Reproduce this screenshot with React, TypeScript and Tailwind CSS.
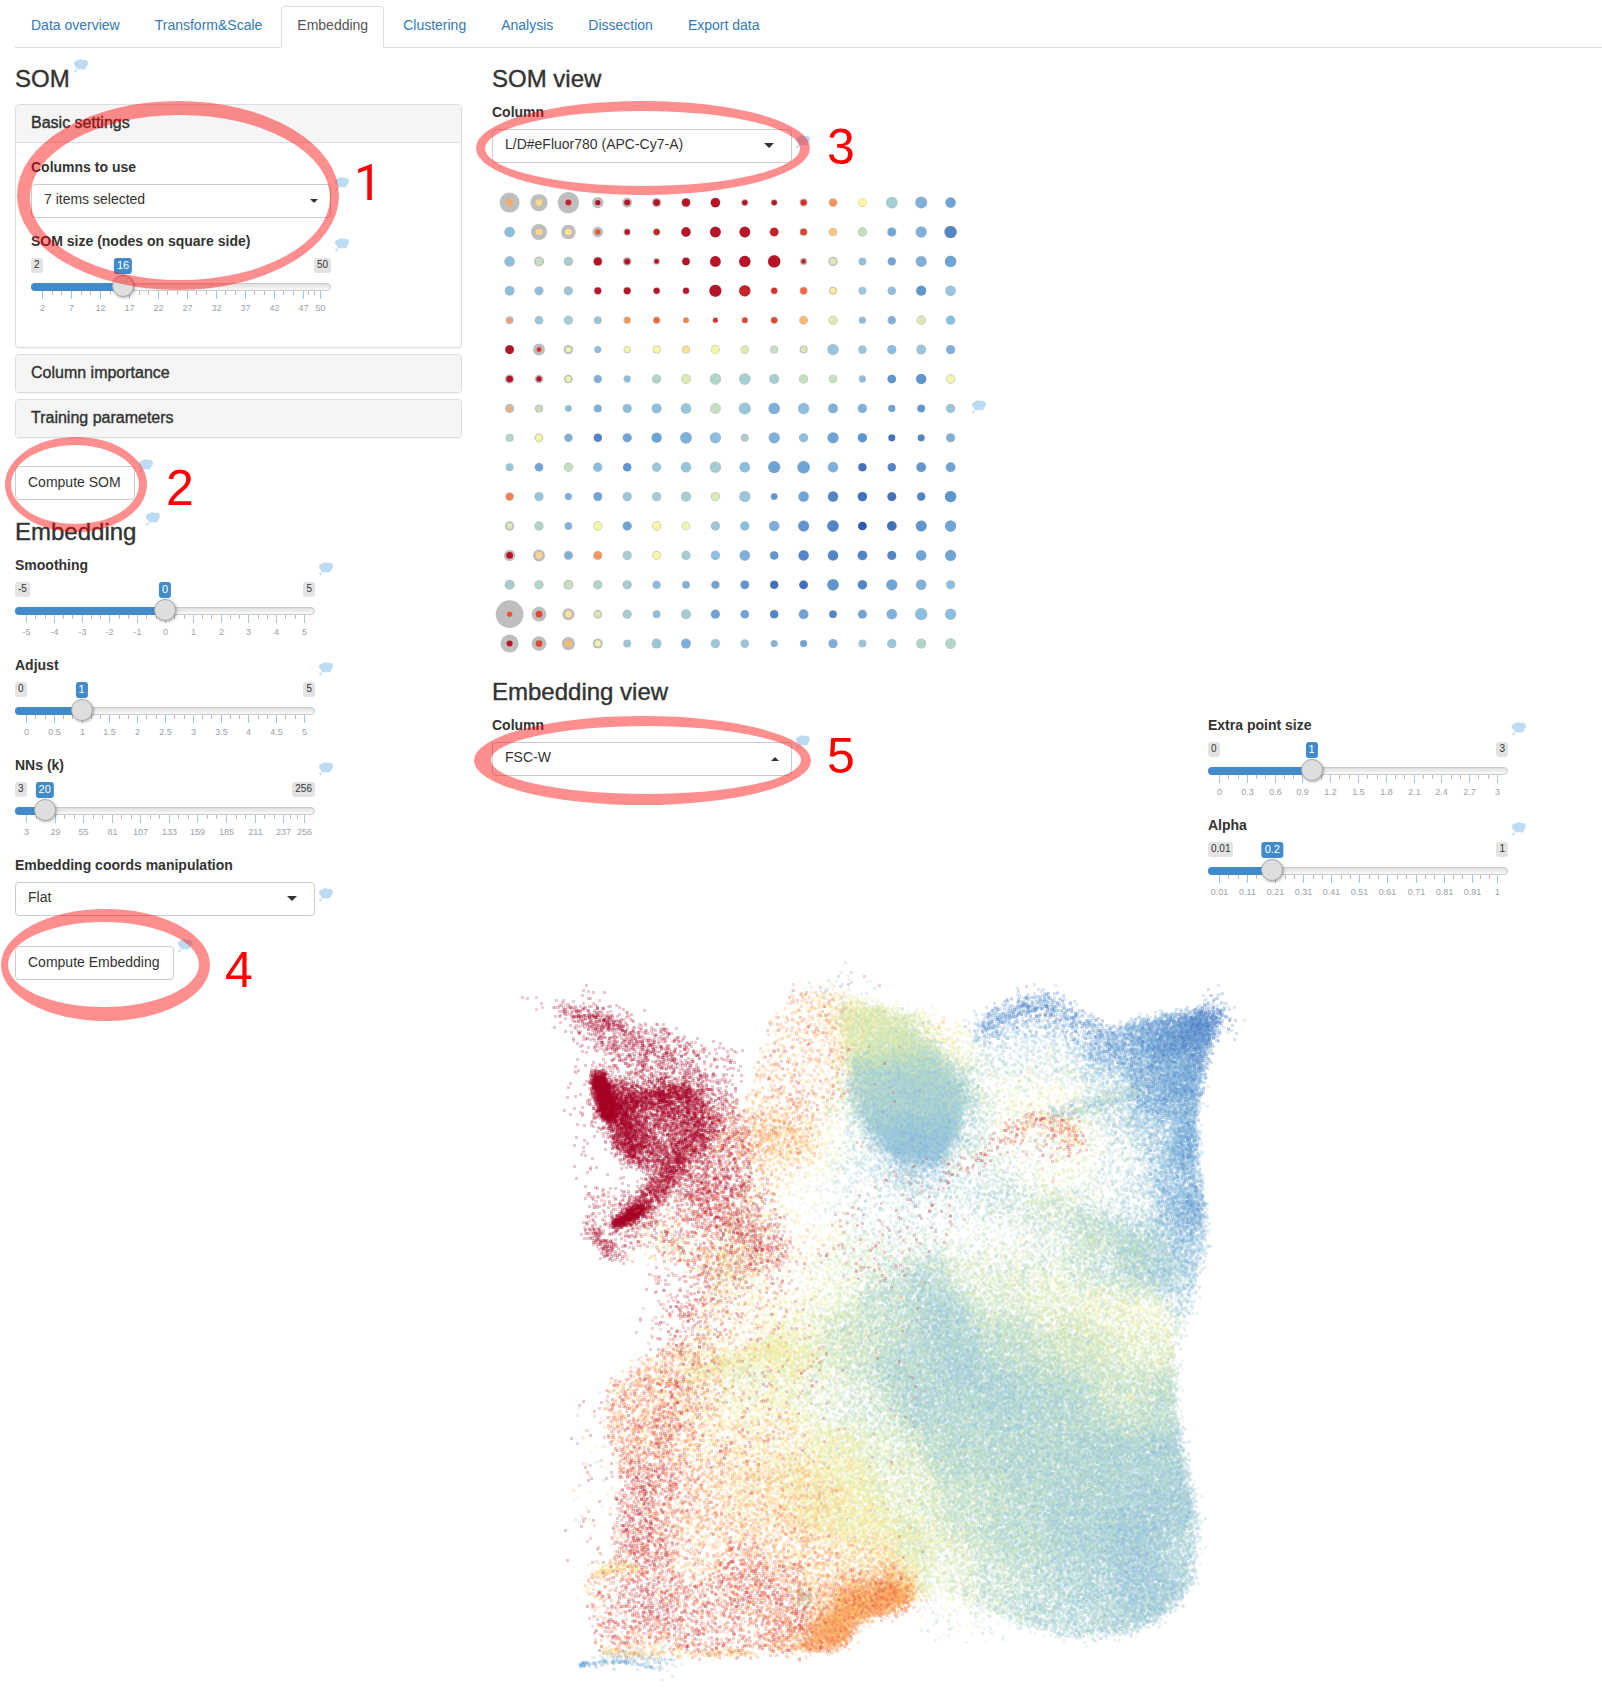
import { useState, type ReactNode } from "react";

/* ---------- shared pieces ---------- */

function Cloud({ className = "" }: { className?: string }) {
  return (
    <svg className={"h-[14px] w-[14px] shrink-0 " + className} viewBox="0 0 14 14" fill="#bcdcf3" aria-hidden="true">
      <circle cx="3.400" cy="4.800" r="3.300" />
      <circle cx="6.400" cy="3.400" r="3.200" />
      <circle cx="10.400" cy="4.200" r="3.500" />
      <circle cx="5" cy="7.600" r="2.900" />
      <circle cx="9.200" cy="7.600" r="2.900" />
      <circle cx="1.500" cy="12" r="1.200" />
      <circle cx="2.800" cy="10" r="0.600" />
    </svg>
  );
}

function Heading({ children, className = "" }: { children: ReactNode; className?: string }) {
  return (
    <h3 className={"flex items-start text-[24px] leading-[26px] font-medium [-webkit-text-stroke:0.4px] " + className}>
      {children}
    </h3>
  );
}

function Picker({
  id,
  label,
  value,
  caret,
  cloud,
}: {
  id: string;
  label: string;
  value: string;
  caret: "wide" | "small" | "up";
  cloud: string;
}) {
  return (
    <div>
      <label htmlFor={id} className="mb-[7px] block font-bold">
        {label}
      </label>
      <div className="flex items-start gap-1">
        <div className="relative w-[300px]">
          <select
            id={id}
            className="block h-[34px] w-full appearance-none rounded border border-[#ccc] bg-white pr-8 pb-1 pl-3 text-[14px] leading-5 outline-none"
          >
            <option>{value}</option>
          </select>
          {caret === "wide" && (
            <svg className="pointer-events-none absolute top-[14px] right-[18px]" width="10" height="5" fill="#333">
              <path d="M0 0h10L5 5z" />
            </svg>
          )}
          {caret === "small" && (
            <svg className="pointer-events-none absolute top-[15px] right-[13px]" width="8" height="4" fill="#333">
              <path d="M0 0h8L4 4z" />
            </svg>
          )}
          {caret === "up" && (
            <svg className="pointer-events-none absolute top-[15px] right-[13px]" width="8" height="4" fill="#333">
              <path d="M0 4h8L4 0z" />
            </svg>
          )}
        </div>
        <Cloud className={cloud} />
      </div>
    </div>
  );
}

function Slider({
  id,
  label,
  min,
  max,
  step,
  initial,
  marks,
}: {
  id: string;
  label: string;
  min: number;
  max: number;
  step: number;
  initial: number;
  marks: number[];
}) {
  const [value, setValue] = useState(initial);
  const place = (v: number) => 11 + ((v - min) / (max - min)) * 278;
  const minors: number[] = [];
  for (let i = 0; i < marks.length - 1; i++) {
    const gap = (marks[i + 1] - marks[i]) / 3;
    minors.push(marks[i] + gap, marks[i] + 2 * gap);
  }
  return (
    <div className="flex items-start gap-1 pb-[14px]">
      <div className="w-[300px]">
        <label htmlFor={id} className="mb-[7px] block font-bold">
          {label}
        </label>
        <div className="relative h-[59px]">
          <div className="flex h-[25px] items-start justify-between text-[10px] leading-[13px]">
            <span className="h-[15px] rounded-[3px] bg-[#e3e3e3] px-[3px]">{min}</span>
            <span className="h-[15px] rounded-[3px] bg-[#e3e3e3] px-[3px]">{max}</span>
          </div>
          <output
            htmlFor={id}
            className="absolute top-0 h-4 -translate-x-1/2 rounded-[3px] bg-[#428bca] px-[3px] text-[11px] leading-[14px] text-white"
            style={{ left: place(value) }}
          >
            {value}
          </output>
          <div className="relative h-2 rounded-full border border-[#ccc] bg-linear-to-b from-[#dedede] to-[#fafafa]">
            <div
              className="absolute -top-px -left-px h-2 rounded-l-full bg-[#428bca]"
              style={{ width: place(value) }}
            />
            <input
              id={id}
              type="range"
              min={min}
              max={max}
              step={step}
              value={value}
              onChange={(e) => setValue(Number(e.target.value))}
              className="absolute -top-[9px] -left-px z-10 m-0 h-[22px] w-[300px] appearance-none bg-transparent outline-none [&::-webkit-slider-thumb]:h-[22px] [&::-webkit-slider-thumb]:w-[22px] [&::-webkit-slider-thumb]:appearance-none [&::-webkit-slider-thumb]:rounded-full [&::-webkit-slider-thumb]:border [&::-webkit-slider-thumb]:border-[#aaa] [&::-webkit-slider-thumb]:bg-[#dedede] [&::-webkit-slider-thumb]:shadow-[1px_1px_3px_rgba(0,0,0,0.3)]"
            />
          </div>
          {minors.map((m) => (
            <span
              key={"n" + m}
              className="absolute top-[33px] h-1 w-px bg-[#bbb]"
              style={{ left: Math.round(place(m)) }}
            />
          ))}
          {marks.map((m) => (
            <span
              key={m}
              className="absolute top-[33px] flex w-px flex-col items-center text-[9px] leading-[10px] text-[#99a2a8]"
              style={{ left: Math.round(place(m)) }}
            >
              <span className="mb-1 h-2 w-px bg-[#9dc6e8]" />
              <span>{m}</span>
            </span>
          ))}
        </div>
      </div>
      <Cloud className="mt-[7px]" />
    </div>
  );
}

function Panel({ title, children }: { title: string; children?: ReactNode }) {
  return (
    <section className="mb-1.5 rounded border border-[#ddd] bg-white shadow-[0_1px_1px_rgba(0,0,0,0.05)]">
      <h4 className="rounded-t bg-[#f5f5f5] px-[15px] pt-[9px] pb-[11px] text-[16px] leading-[17px] font-medium [-webkit-text-stroke:0.4px]">
        <button type="button" className="block font-medium">
          {title}
        </button>
      </h4>
      {children}
    </section>
  );
}

/* ---------- SOM node plot ---------- */

const NODE_COLORS: Record<string, string> = {
  R: "#b51526", S: "#c62228", r: "#da2f27", q: "#e04630", e: "#e95538", o: "#f2693f", p: "#f5834f",
  O: "#fb9455", n: "#fdaa60", m: "#fdb96c", l: "#fdc77a", k: "#fed688", j: "#fee292", i: "#feec99",
  y: "#fdf5a2", Y: "#f2f6aa", g: "#dbeab4", G: "#c5e0bf", t: "#b1d5cb", T: "#a6cdd2", c: "#9ac6dc",
  C: "#8cbee0", b: "#7eb0da", B: "#6fa4d6", a: "#6096cf", A: "#5185c6", d: "#4171bd", D: "#2f5cb0",
};

/* colour code, inner size / outer size in sixths of a radius pixel */
const NODES = [
  "n20/60 k20/52 S18/64 R16/34 R18/30 R20/28 R24/28 R28/30 R16/22 R16/20 r18/24 O22/26 y24/26 T33/35 b34/36 B30/32",
  "C30/32 k20/48 j20/44 e16/32 R16/22 S18/22 R28/30 R32/34 R32/34 S26/28 q20/24 l22/26 G24/28 B24/28 b32/34 A36/38",
  "C28/32 G22/30 T22/28 R24/28 R18/26 R14/20 R22/26 R32/32 R34/34 R37/38 S14/22 g20/28 C20/24 B22/26 b30/34 B34/34",
  "C26/30 C22/28 c22/28 R20/24 R20/24 R18/22 R18/22 R36/37 S34/34 r18/22 o20/24 i18/24 c20/24 C22/26 a30/30 c30/32",
  "O14/24 c22/26 T24/28 c20/24 O18/22 o18/22 p16/18 r14/18 q16/20 q18/22 m22/26 g26/28 C18/22 b22/26 g24/28 C26/28",
  "R26/28 r14/36 Y16/28 C18/22 Y18/22 y20/24 j20/24 Y25/27 g24/26 G20/24 g18/24 c32/34 c22/26 C26/28 c26/30 b26/28",
  "R20/28 R16/26 Y16/26 b22/26 C18/22 t26/28 g28/30 t32/34 T33/35 T26/30 G26/28 G24/26 C18/22 a26/26 a30/32 Y24/28",
  "n14/28 G18/24 C18/20 b22/24 C24/28 C28/30 c30/32 G30/32 c34/36 b34/34 C32/34 b28/30 b26/28 B20/22 a22/24 c24/28",
  "t20/24 y20/26 b22/26 A24/26 B26/28 B30/30 b34/35 C32/34 T18/24 b32/34 C26/28 B32/34 a28/28 d20/22 A20/22 b24/28",
  "c20/24 B24/26 G24/28 C26/28 a24/26 c26/28 c30/32 T32/34 C30/32 B35/37 B36/38 b30/32 d24/26 A24/26 a28/30 B28/30",
  "p22/26 c24/28 b20/22 B24/28 c24/28 T26/28 T28/30 g24/28 c30/34 a18/22 B30/32 A30/32 d28/28 d26/28 A24/26 a34/34",
  "g18/28 t24/28 b20/24 Y24/28 B26/28 y24/28 Y22/26 c24/28 C26/28 b30/32 a32/34 A34/35 D26/26 d28/30 a32/34 B33/34",
  "R20/34 k20/36 b22/28 O22/28 T24/28 y22/26 T24/28 C26/28 b30/32 a24/26 A30/32 A30/32 A28/30 A26/28 B30/32 B32/34",
  "T22/30 t22/28 G24/30 t24/28 T24/28 C22/26 b20/24 B22/26 a24/28 d24/26 d26/26 a34/35 A28/28 B32/34 b30/32 C24/28",
  "e16/83 q20/44 j20/36 g18/26 T24/28 C20/24 T28/30 B26/28 B24/26 A24/26 B28/30 A22/24 B24/28 b30/32 C35/37 C32/34",
  "R18/54 q20/44 m20/40 Y18/30 c20/24 c26/30 b28/30 c24/28 c22/26 b18/22 B20/22 b26/28 c20/24 c26/28 t28/30 t30/32",
].map((row) => row.split(" "));

function SomPlot() {
  return (
    <svg width="472" height="490" viewBox="0 0 472 490" className="shrink-0" role="img" aria-label="SOM nodes">
      {NODES.map((row, j) =>
        row.map((node, i) => {
          const [inner, outer] = node.slice(1).split("/").map(Number);
          const cx = 17.6 + i * 29.4;
          const cy = 24.6 + j * 29.4;
          return (
            <g key={i + "-" + j}>
              <circle cx={cx} cy={cy} r={outer / 6} fill="#bebebe" />
              <circle cx={cx} cy={cy} r={inner / 6} fill={NODE_COLORS[node[0]]} />
            </g>
          );
        })
      )}
    </svg>
  );
}

/* ---------- embedding scatter plot ---------- */

const RAMP = [
  "#a50026", "#d02c2e", "#f06a42", "#fda860", "#fed98a", "#f5f09c", "#dbe9ae",
  "#c0dec0", "#a8d0d0", "#94c5dd", "#7ab1dc", "#5b92cf", "#3f6bbd",
];

type Pt = [number, number];

/* outline of the main cloud of cells */
const OUTLINE: Pt[] = [
  [790, 985], [830, 990], [880, 1005], [960, 1022], [1000, 1008], [1030, 998], [1060, 1006], [1110, 1028],
  [1150, 1018], [1200, 1012], [1219, 1008], [1205, 1050], [1197, 1085], [1192, 1140], [1200, 1200],
  [1202, 1240], [1190, 1300], [1176, 1340], [1172, 1390], [1178, 1440], [1188, 1490], [1196, 1530],
  [1190, 1580], [1165, 1612], [1120, 1632], [1070, 1636], [1020, 1622], [970, 1600], [930, 1590],
  [905, 1598], [870, 1608], [852, 1622], [842, 1640], [830, 1648], [770, 1650], [600, 1648], [592, 1610],
  [582, 1582], [612, 1555], [622, 1480], [606, 1430], [605, 1390], [640, 1360], [690, 1335], [708, 1280],
  [720, 1220], [760, 1160], [745, 1100], [765, 1040],
];

/* x, y, density, colour position along RAMP */
const FIELD: [number, number, number, number][] = [
  [800, 990, 0.07, 3.5], [830, 1000, 0.2, 4.5], [860, 1010, 0.4, 5.5], [900, 1040, 0.7, 6.6], [930, 1060, 0.8, 7.5],
  [870, 1060, 0.7, 7.3], [900, 1090, 1.1, 8.2], [940, 1100, 1, 8.3], [850, 1030, 0.3, 5], [845, 1090, 0.25, 7],
  [870, 1110, 0.6, 8.5], [900, 1140, 1.1, 9], [925, 1150, 1, 9.2], [945, 1130, 0.9, 8.8], [958, 1090, 0.8, 8],
  [978, 1080, 0.12, 7], [965, 1120, 0.15, 8], [935, 1175, 0.15, 9], [875, 1160, 0.15, 8.5], [850, 1130, 0.1, 8],
  [820, 1080, 0.04, 4], [800, 1040, 0.04, 3], [825, 1045, 0.06, 3.5], [790, 1100, 0.05, 3], [830, 1130, 0.04, 5],
  [790, 1160, 0.05, 4.5], [860, 1180, 0.06, 8], [820, 1200, 0.035, 7], [880, 1210, 0.035, 8], [930, 1210, 0.04, 8],
  [800, 1230, 0.04, 4], [960, 1040, 0.08, 5], [950, 1020, 0.06, 4], [980, 1028, 0.15, 10.5], [1010, 1015, 0.15, 10.8],
  [1040, 1005, 0.15, 10.8], [1080, 1025, 0.18, 10.8], [1010, 1050, 0.12, 8], [1050, 1060, 0.13, 7.5],
  [1000, 1090, 0.1, 6], [1110, 1045, 0.55, 10.5], [1150, 1035, 1, 10.4], [1190, 1030, 1.2, 10.8],
  [1215, 1012, 0.5, 11.8], [1140, 1070, 0.8, 10.1], [1180, 1080, 1.3, 10.3], [1110, 1085, 0.2, 8],
  [1160, 1100, 0.8, 10.1], [1185, 1140, 1.3, 10.1], [1155, 1130, 0.3, 9], [1190, 1200, 1, 10], [1170, 1180, 0.5, 9.8],
  [1120, 1160, 0.1, 8], [1130, 1200, 0.15, 8.5], [1190, 1240, 0.5, 9.8], [1180, 1295, 0.25, 9.5],
  [1000, 1130, 0.05, 6], [1050, 1100, 0.07, 5], [1080, 1150, 0.07, 6], [1020, 1160, 0.05, 7], [1050, 1170, 0.07, 6],
  [960, 1160, 0.06, 7], [970, 1175, 0.12, 8], [1000, 1190, 0.3, 7.8], [1050, 1205, 0.4, 7], [1090, 1230, 0.7, 7.5],
  [1130, 1250, 1, 8.2], [1160, 1270, 0.8, 8.8], [1100, 1262, 0.35, 8], [1050, 1240, 0.18, 7.5], [1000, 1230, 0.08, 7],
  [960, 1230, 0.06, 7], [1100, 1190, 0.09, 7.5], [900, 1240, 0.15, 7.5], [860, 1260, 0.2, 7], [920, 1280, 0.7, 8.4],
  [940, 1310, 1, 8.6], [880, 1300, 0.6, 7.9], [830, 1280, 0.15, 6.5], [790, 1280, 0.05, 5], [800, 1310, 0.2, 6],
  [780, 1345, 0.35, 5.7], [740, 1335, 0.08, 4.5], [840, 1330, 0.6, 7.2], [970, 1270, 0.25, 7], [1000, 1290, 0.35, 7],
  [1050, 1290, 0.3, 6.5], [1100, 1310, 0.3, 6.2], [1150, 1310, 0.2, 5.9], [1140, 1340, 0.35, 6.5],
  [1080, 1340, 0.7, 7.1], [1000, 1340, 0.8, 7.8], [960, 1360, 1.1, 8.6], [900, 1370, 0.9, 8.2], [920, 1400, 0.9, 8.4],
  [1000, 1390, 1, 8.5], [1060, 1400, 1, 8.2], [1120, 1390, 0.6, 7.3], [1160, 1400, 0.8, 7.8], [1165, 1450, 1.1, 8.6],
  [1100, 1450, 1.1, 8.4], [1030, 1460, 1, 8.3], [960, 1450, 0.9, 8.1], [1170, 1510, 1.1, 8.8], [1185, 1540, 0.5, 8.7],
  [1130, 1530, 1.2, 8.9], [1070, 1520, 1, 8.5], [1010, 1530, 0.8, 8], [960, 1510, 0.6, 7.6], [1140, 1580, 1, 9],
  [1090, 1590, 0.7, 8.6], [1040, 1600, 0.5, 8.3], [1070, 1625, 0.4, 8.6], [990, 1580, 0.4, 7.7], [940, 1570, 0.2, 6.6],
  [920, 1540, 0.4, 6.4], [900, 1490, 0.35, 6.6], [880, 1440, 0.35, 6.9], [860, 1400, 0.3, 7.5], [820, 1400, 0.2, 6.8],
  [840, 1450, 0.3, 5.8], [800, 1480, 0.3, 4.9], [820, 1500, 0.4, 5.2], [850, 1520, 0.35, 5.6], [860, 1560, 0.17, 4.7],
  [780, 1430, 0.13, 4.8], [740, 1400, 0.14, 5.5], [700, 1385, 0.13, 4.2], [740, 1375, 0.2, 6.4], [660, 1380, 0.13, 3.5],
  [625, 1400, 0.11, 3], [660, 1430, 0.13, 3.4], [700, 1440, 0.1, 4], [650, 1480, 0.11, 1.8], [640, 1540, 0.11, 1.5],
  [700, 1500, 0.11, 3.4], [750, 1500, 0.16, 4.1], [700, 1550, 0.08, 3.6], [620, 1600, 0.07, 1.3],
  [650, 1610, 0.12, 1.2], [700, 1610, 0.08, 2], [740, 1570, 0.14, 2], [770, 1590, 0.14, 2.3], [740, 1630, 0.07, 2.2],
  [790, 1610, 0.15, 2.5], [820, 1600, 0.2, 3.5], [830, 1630, 0.6, 3.3], [850, 1605, 0.9, 3.3], [880, 1590, 0.6, 3],
  [860, 1580, 0.25, 3.4], [800, 1645, 0.25, 3], [650, 1645, 0.1, 3.2], [600, 1580, 0.06, 2.8], [770, 1540, 0.11, 3.5],
  [820, 1560, 0.12, 3.8],
];

/* polyline, spread, count, colour, colour spread */
const STREAKS: [Pt[], number, number, number, number][] = [
  [[[597, 1076], [602, 1095], [608, 1115]], 4, 2300, 0, 0.2],
  [[[605, 1090], [618, 1120], [634, 1150]], 9, 1300, 0, 0.2],
  [[[612, 1102], [650, 1098], [690, 1090]], 7, 550, 0, 0.2],
  [[[708, 1122], [686, 1150], [665, 1175], [645, 1200], [622, 1218]], 7, 1300, 0, 0.3],
  [[[640, 1206], [628, 1215], [613, 1223]], 3, 650, 0, 0.2],
  [[[580, 1014], [600, 1022], [620, 1038], [650, 1055], [690, 1085]], 13, 480, 0, 0.3],
  [[[560, 1006], [580, 1014], [618, 1030]], 5, 130, 0, 0.3],
  [[[522, 1001], [540, 1008], [560, 1006]], 4, 9, 0, 0.3],
  [[[588, 1225], [600, 1244], [616, 1256]], 5, 130, 0, 0.4],
  [[[640, 1225], [690, 1250], [745, 1272]], 14, 500, 4.5, 1.5],
  [[[690, 1200], [730, 1215], [765, 1260]], 14, 600, 0.9, 0.8],
  [[[725, 1145], [755, 1135], [780, 1140]], 20, 650, 2.8, 0.9],
  [[[770, 1140], [810, 1140]], 14, 300, 3.8, 0.7],
  [[[585, 1661], [579, 1664], [605, 1660], [625, 1661], [655, 1666]], 1, 130, 10, 0.6],
  [[[595, 1658], [630, 1655], [670, 1662]], 5, 130, 9.5, 1],
  [[[600, 1650], [640, 1652], [700, 1652], [750, 1651]], 3, 300, 3.8, 1],
  [[[690, 1373], [725, 1362], [760, 1348], [785, 1342]], 6, 600, 5.3, 0.6],
  [[[596, 1574], [612, 1565], [640, 1567]], 3, 170, 4.2, 0.8],
  [[[1000, 1138], [1030, 1118], [1062, 1122]], 6, 140, 1.8, 1],
  [[[945, 1172], [975, 1160], [1000, 1138]], 7, 55, 0.6, 0.8],
  [[[1066, 1118], [1076, 1142]], 7, 80, 2.2, 0.8],
  [[[1010, 1130], [1075, 1150]], 12, 80, 1.5, 1],
  [[[1050, 1112], [1095, 1104], [1140, 1085]], 5, 450, 8, 1.2],
  [[[980, 1028], [1000, 1018], [1030, 1001], [1060, 1008], [1100, 1030]], 7, 480, 11, 0.6],
  [[[1150, 1050], [1190, 1035], [1212, 1014]], 8, 700, 11, 0.5],
  [[[1190, 1030], [1222, 1010]], 12, 150, 11.4, 0.6],
  [[[799, 1602], [807, 1590]], 5, 90, 7.2, 0.7],
  [[[820, 980], [870, 985]], 9, 30, 8, 3],
  [[[700, 1260], [700, 1310], [690, 1345]], 22, 330, 0.7, 0.8],
  [[[685, 1380], [650, 1450], [640, 1560]], 14, 380, 0.8, 0.8],
];

/* polygon, count, colour, colour spread */
const AREAS: [Pt[], number, number, number][] = [
  [[[602, 1085], [690, 1085], [706, 1115], [655, 1172], [628, 1158]], 2500, 0, 0.3],
  [[[590, 1015], [680, 1030], [700, 1070], [740, 1110], [700, 1120], [600, 1080]], 900, 0, 0.4],
  [[[680, 1035], [735, 1045], [738, 1100], [700, 1080]], 110, 0, 0.4],
  [[[700, 1090], [745, 1125], [750, 1190], [700, 1200], [650, 1190]], 1000, 0.2, 0.6],
  [[[583, 1195], [640, 1180], [660, 1230], [616, 1260], [596, 1242]], 260, 0.1, 0.5],
  [[[650, 1180], [770, 1180], [790, 1260], [700, 1280], [660, 1240]], 700, 0.9, 1],
  [[[790, 990], [850, 1000], [850, 1090], [800, 1150], [745, 1130], [755, 1080]], 450, 2.5, 1],
  [[[640, 1270], [800, 1250], [830, 1400], [700, 1500], [630, 1400]], 450, 0.6, 0.8],
  [[[870, 1180], [940, 1150], [960, 1230], [880, 1290], [800, 1260]], 120, 0.4, 0.6],
  [[[575, 1400], [625, 1380], [620, 1600], [575, 1600]], 130, 3.5, 4],
  [[[885, 1600], [990, 1600], [1000, 1642], [920, 1636]], 90, 6.8, 1],
  [[[560, 1060], [600, 1060], [600, 1220], [570, 1180]], 50, 0, 0.3],
  [[[835, 1008], [870, 1006], [900, 1022], [935, 1060], [850, 1065]], 2300, 6.3, 0.7],
  [[[850, 1060], [930, 1052], [963, 1092], [954, 1125], [875, 1130], [852, 1100]], 6500, 8, 0.6],
  [[[865, 1120], [958, 1115], [935, 1155], [890, 1150]], 3200, 8.9, 0.5],
  [[[795, 1648], [842, 1640], [852, 1622], [905, 1600], [900, 1580], [850, 1588], [820, 1622]], 2200, 3, 0.4],
  [[[890, 1585], [910, 1588], [908, 1606], [870, 1612]], 250, 2.4, 0.5],
];

function randomSource(seed: number) {
  let s = seed;
  return () => {
    s = (s + 0x6d2b79f5) | 0;
    let t = Math.imul(s ^ (s >>> 15), 1 | s);
    t = (t + Math.imul(t ^ (t >>> 7), 61 | t)) ^ t;
    return ((t ^ (t >>> 14)) >>> 0) / 4294967296;
  };
}

function inside(x: number, y: number, poly: Pt[]) {
  let hit = false;
  for (let i = 0, j = poly.length - 1; i < poly.length; j = i++) {
    const [xi, yi] = poly[i];
    const [xj, yj] = poly[j];
    if (yi > y !== yj > y && x < ((xj - xi) * (y - yi)) / (yj - yi) + xi) hit = !hit;
  }
  return hit;
}

function buildPaths() {
  const rnd = randomSource(7);
  const gauss = () => Math.sqrt(-2 * Math.log(rnd() + 1e-9)) * Math.cos(6.2832 * rnd());
  const dots: [number, number, number][] = [];
  const add = (x: number, y: number, t: number) =>
    dots.push([Math.round(x), Math.round(y), Math.max(0, Math.min(12, Math.round(t)))]);

  const cell = 4;
  for (let cy = 975; cy < 1660; cy += cell) {
    for (let cx = 570; cx < 1230; cx += cell) {
      if (!inside(cx + 2, cy + 2, OUTLINE)) continue;
      let w = 0;
      let density = 0;
      let tone = 0;
      for (const [fx, fy, fd, ft] of FIELD) {
        const d2 = (fx - cx) ** 2 + (fy - cy) ** 2 + 150;
        const k = 1 / (d2 * d2);
        w += k;
        density += k * fd;
        tone += k * ft;
      }
      density /= w;
      tone /= w;
      if (cy > 1230) tone -= 0.4;
      if (cy > 1340 && tone < 6) density *= 1.7;
      const spread = tone < 5 ? 1.1 : 0.75;
      const count = density * cell * cell * 0.85;
      const n = Math.floor(count) + (rnd() < count % 1 ? 1 : 0);
      for (let i = 0; i < n; i++) {
        const stray = rnd() < 0.006 && cx < 920;
        add(
          cx + rnd() * cell + gauss() * 4,
          cy + rnd() * cell + gauss() * 4,
          stray ? rnd() * 2 : tone + gauss() * spread
        );
      }
    }
  }
  for (const [line, spread, count, tone, toneSpread] of STREAKS) {
    for (let i = 0; i < count; i++) {
      const u = rnd() * (line.length - 1);
      const k = Math.floor(u);
      const f = u - k;
      const x = line[k][0] * (1 - f) + line[k + 1][0] * f;
      const y = line[k][1] * (1 - f) + line[k + 1][1] * f;
      add(x + gauss() * spread, y + gauss() * spread, tone + gauss() * toneSpread);
    }
  }
  for (const [poly, count, tone, toneSpread] of AREAS) {
    const xs = poly.map((p) => p[0]);
    const ys = poly.map((p) => p[1]);
    const x0 = Math.min(...xs);
    const y0 = Math.min(...ys);
    const w = Math.max(...xs) - x0;
    const h = Math.max(...ys) - y0;
    let placed = 0;
    while (placed < count) {
      const x = x0 + rnd() * w;
      const y = y0 + rnd() * h;
      if (!inside(x, y, poly)) continue;
      add(x + gauss() * 5, y + gauss() * 5, tone + gauss() * toneSpread);
      placed++;
    }
  }
  for (let i = dots.length - 1; i > 0; i--) {
    const j = Math.floor(rnd() * (i + 1));
    [dots[i], dots[j]] = [dots[j], dots[i]];
  }
  const paths: { color: string; d: string }[] = [];
  const pending: string[][] = RAMP.map(() => []);
  const flush = (c: number) => {
    if (pending[c].length) paths.push({ color: RAMP[c], d: pending[c].join("") });
    pending[c] = [];
  };
  for (const [x, y, c] of dots) {
    pending[c].push(`M${x} ${y}h3v3h-3z`);
    if (pending[c].length >= 160) flush(c);
  }
  RAMP.forEach((_, c) => flush(c));
  return paths;
}

const SCATTER = buildPaths();

function EmbeddingPlot() {
  return (
    <svg width="768" height="740" viewBox="492 941 768 740" fillOpacity="0.22" role="img" aria-label="Embedding of cells">
      {SCATTER.map((p, i) => (
        <path key={i} d={p.d} fill={p.color} shapeRendering="crispEdges" />
      ))}
    </svg>
  );
}

/* ---------- numbered walkthrough marks ---------- */

/* outer left, right, top, bottom, then the same for the inner edge */
const RINGS = [
  [17, 339, 101, 290, 30, 330, 115, 280],
  [5, 147, 437, 532, 11, 139, 445, 524],
  [476, 810, 101, 195, 485, 800, 111, 186],
  [1, 210, 909, 1021, 8, 199, 922, 1007],
  [474, 811, 716, 805, 491, 801, 726, 794],
];

const STEPS: [string, number, number][] = [
  ["1", 354, 200],
  ["2", 166, 505],
  ["3", 827, 164],
  ["4", 225, 987],
  ["5", 827, 773],
];

function oval(l: number, r: number, t: number, b: number) {
  const rx = (r - l) / 2;
  const ry = (b - t) / 2;
  return `M${l} ${t + ry}a${rx} ${ry} 0 1 0 ${2 * rx} 0a${rx} ${ry} 0 1 0 ${-2 * rx} 0z`;
}

function Walkthrough() {
  return (
    <svg className="pointer-events-none absolute top-0 left-0 z-20" width="880" height="1040">
      {RINGS.map((q, i) => (
        <path
          key={i}
          d={oval(q[0], q[1], q[2], q[3]) + oval(q[4], q[5], q[6], q[7])}
          fill="#ff0000"
          fillOpacity="0.44"
          fillRule="evenodd"
        />
      ))}
      {STEPS.map(([n, x, y]) => (
        <text key={n} x={x} y={y} fill="#ff0000" fontSize="50" fontFamily={n === "1" ? "Roboto, sans-serif" : undefined}>
          {n}
        </text>
      ))}
    </svg>
  );
}

/* ---------- page ---------- */

const TABS = ["Data overview", "Transform&Scale", "Embedding", "Clustering", "Analysis", "Dissection", "Export data"];

const BUTTON = "h-[34px] rounded border border-[#ccc] bg-white pr-[13px] pl-3 pb-[3px] text-[14px] leading-5";

export default function App() {
  return (
    <div className="relative min-h-screen overflow-hidden bg-white pb-5 font-['Liberation_Sans',Arial,sans-serif] text-[14px] leading-5 text-[#333]">
      <nav className="pt-1.5 pl-[15px]">
        <ul className="flex gap-[3px] border-b border-[#ddd]">
          {TABS.map((t) => (
            <li key={t} className="-mb-px">
              <a
                href="#"
                className={
                  "block rounded-t border px-[15px] pt-2 pb-3 " +
                  (t === "Embedding" ? "border-[#ddd] border-b-white bg-white text-[#555]" : "border-transparent text-[#337ab7]")
                }
              >
                {t}
              </a>
            </li>
          ))}
        </ul>
      </nav>

      <main className="grid grid-cols-[477fr_1125fr] pt-[18px]">
        <div className="px-[15px]">
          <Heading className="mb-3">
            SOM
            <Cloud className="-mt-[7px] ml-1" />
          </Heading>
          <Panel title="Basic settings">
            <div className="border-t border-[#ddd] px-[15px] pt-[14px] pb-4">
              <Picker id="columns" label="Columns to use" value="7 items selected" caret="small" cloud="-mt-[7px]" />
              <div className="mt-[13px]">
                <Slider
                  id="som-size"
                  label="SOM size (nodes on square side)"
                  min={2}
                  max={50}
                  step={1}
                  initial={16}
                  marks={[2, 7, 12, 17, 22, 27, 32, 37, 42, 47, 50]}
                />
              </div>
            </div>
          </Panel>
          <Panel title="Column importance" />
          <Panel title="Training parameters" />
          <div className="mt-7 flex items-start gap-1">
            <button type="button" className={BUTTON}>
              Compute SOM
            </button>
            <Cloud className="-mt-[7px]" />
          </div>

          <Heading className="mt-[19px] mb-2.5">
            Embedding
            <Cloud className="-mt-[7px] ml-2.5" />
          </Heading>
          <Slider id="smoothing" label="Smoothing" min={-5} max={5} step={0.1} initial={0} marks={[-5, -4, -3, -2, -1, 0, 1, 2, 3, 4, 5]} />
          <Slider id="adjust" label="Adjust" min={0} max={5} step={0.1} initial={1} marks={[0, 0.5, 1, 1.5, 2, 2.5, 3, 3.5, 4, 4.5, 5]} />
          <Slider id="nns" label="NNs (k)" min={3} max={256} step={1} initial={20} marks={[3, 29, 55, 81, 107, 133, 159, 185, 211, 237, 256]} />
          <Picker id="coords" label="Embedding coords manipulation" value="Flat" caret="wide" cloud="mt-1.5" />
          <div className="mt-[30px] flex items-start gap-1">
            <button type="button" className={BUTTON}>
              Compute Embedding
            </button>
            <Cloud className="-mt-[7px]" />
          </div>
        </div>

        <div className="pl-[15px]">
          <Heading className="mb-2.5">SOM view</Heading>
          <Picker id="som-column" label="Column" value="L/D#eFluor780 (APC-Cy7-A)" caret="wide" cloud="mt-1.5" />
          <div className="mt-[15px] flex items-center gap-2">
            <SomPlot />
            <Cloud className="-mt-8" />
          </div>

          <Heading className="mt-[11px] mb-2.5">Embedding view</Heading>
          <div className="grid grid-cols-[716fr_394fr]">
            <Picker id="emb-column" label="Column" value="FSC-W" caret="up" cloud="-mt-[7px]" />
            <div>
              <Slider id="point-size" label="Extra point size" min={0} max={3} step={0.1} initial={1} marks={[0, 0.3, 0.6, 0.9, 1.2, 1.5, 1.8, 2.1, 2.4, 2.7, 3]} />
              <Slider id="alpha" label="Alpha" min={0.01} max={1} step={0.01} initial={0.2} marks={[0.01, 0.11, 0.21, 0.31, 0.41, 0.51, 0.61, 0.71, 0.81, 0.91, 1]} />
            </div>
          </div>
          <div className="mt-[26px]">
            <EmbeddingPlot />
          </div>
        </div>
      </main>

      <Walkthrough />
    </div>
  );
}
